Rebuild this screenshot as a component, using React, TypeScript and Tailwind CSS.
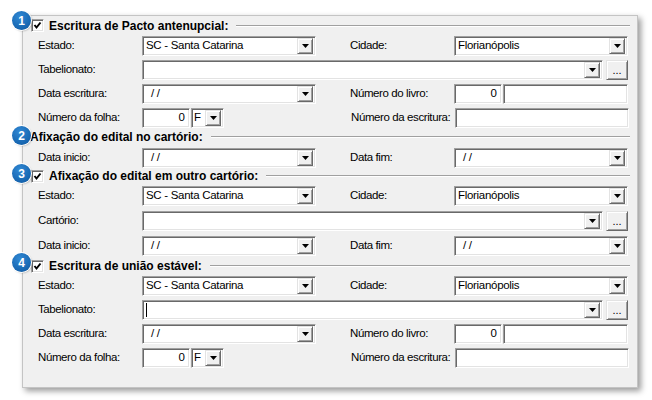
import type { ReactNode } from 'react'

// caixa "afundada" no estilo Windows clássico
const sunken =
  'h-[20px] bg-white border border-t-[#a0a0a0] border-l-[#a0a0a0] border-b-white border-r-white shadow-[inset_1px_1px_0_#696969,inset_-1px_-1px_0_#e3e3e3] flex items-center'

const raised =
  'bg-[#f0f0f0] border border-t-[#e3e3e3] border-l-[#e3e3e3] border-b-[#696969] border-r-[#696969] shadow-[inset_1px_1px_0_#ffffff,inset_-1px_-1px_0_#a0a0a0]'

function Arrow() {
  return (
    <svg width="7" height="4" viewBox="0 0 7 4">
      <polygon points="0,0 7,0 3.5,4" fill="#000" />
    </svg>
  )
}

function DropBtn() {
  return (
    <div className={`${raised} w-[16px] h-[16px] mr-[2px] flex items-center justify-center shrink-0`}>
      <Arrow />
    </div>
  )
}

function Combo({ value, className, pad = 'pl-[3px]' }: { value?: string; className: string; pad?: string }) {
  return (
    <div className={`${sunken} ${className}`}>
      <span className={`flex-1 truncate tracking-[-0.3px] text-[11.5px] ${pad}`}>{value}</span>
      <DropBtn />
    </div>
  )
}

function TextBox({ value, className, right }: { value?: string; className: string; right?: boolean }) {
  return (
    <div className={`${sunken} ${className} ${right ? 'justify-end pr-[4px]' : 'pl-[3px]'}`}>
      <span className="text-[11.5px]">{value}</span>
    </div>
  )
}

function Label({ children, right }: { children: ReactNode; right?: boolean }) {
  return (
    <div className={`${right ? 'w-[138px] pl-[34px]' : 'w-[119px] pl-[15px]'} shrink-0 text-[11.5px] tracking-[-0.4px] whitespace-nowrap`}>
      {children}
    </div>
  )
}

function Row({ children }: { children: ReactNode }) {
  return <div className="flex items-center h-[20px]">{children}</div>
}

function Check() {
  return (
    <div className="w-[13px] h-[13px] bg-white border border-t-[#a0a0a0] border-l-[#a0a0a0] border-b-white border-r-white shadow-[inset_1px_1px_0_#696969,inset_-1px_-1px_0_#e3e3e3] flex items-center justify-center shrink-0">
      <svg width="9" height="9" viewBox="0 0 9 9">
        <path d="M1.5 4 L3.5 6.5 L7.5 1.5" stroke="#000" strokeWidth="2" fill="none" />
      </svg>
    </div>
  )
}

function Header({ title, checked, className }: { title: string; checked?: boolean; className: string }) {
  return (
    <div className={`flex items-center ${className}`}>
      {checked ? (
        <div className="ml-[8px] mr-[5px] flex items-center">
          <Check />
        </div>
      ) : (
        <div className="w-[7px]" />
      )}
      <span className="font-bold text-[12px] whitespace-nowrap">{title}</span>
      <div className="flex-1 ml-[8px] mr-[7px] border-t border-b border-t-[#a0a0a0] border-b-white" />
    </div>
  )
}

function Badge({ n, className }: { n: number; className: string }) {
  return (
    <div
      className={`absolute w-[19px] h-[19px] rounded-full bg-[radial-gradient(circle_at_40%_30%,#3088d4,#0b56a0)] shadow-[0_0_0_1px_#ffffff,1px_1px_2px_rgba(0,0,0,0.35)] text-white font-bold text-[12px] flex items-center justify-center ${className}`}
    >
      {n}
    </div>
  )
}

function Estado() {
  return (
    <Row>
      <Label>Estado:</Label>
      <Combo value="SC - Santa Catarina" className="w-[174px]" />
      <Label right>Cidade:</Label>
      <Combo value="Florianópolis" className="w-[174px]" />
    </Row>
  )
}

function WideRow({ label, cursor }: { label: string; cursor?: boolean }) {
  return (
    <Row>
      <Label>{label}</Label>
      <div className={`${sunken} w-[461px]`}>
        <span className="flex-1 pl-[3px] h-[14px]">
          {cursor && <span className="inline-block w-px h-[14px] bg-black" />}
        </span>
        <DropBtn />
      </div>
      <div className={`${raised} ml-[3px] w-[22px] h-[20px] flex items-end justify-center pb-[3px] leading-none`}>
        ...
      </div>
    </Row>
  )
}

function Escritura({ cursor }: { cursor?: boolean }) {
  return (
    <>
      <Estado />
      <WideRow label="Tabelionato:" cursor={cursor} />
      <Row>
        <Label>Data escritura:</Label>
        <Combo value="/ /" className="w-[174px]" pad="pl-[8px]" />
        <Label right>Número do livro:</Label>
        <TextBox value="0" right className="w-[48px]" />
        <TextBox className="w-[125px] ml-[1px]" />
      </Row>
      <Row>
        <Label>Número da folha:</Label>
        <TextBox value="0" right className="w-[48px]" />
        <Combo value="F" className="w-[33px] ml-[1px]" pad="pl-[2px]" />
        <div className="w-[93px]" />
        <Label right>Número da escritura:</Label>
        <TextBox className="w-[174px]" />
      </Row>
    </>
  )
}

export default function App() {
  return (
    <div className="relative w-[652px] h-[400px] bg-white overflow-hidden font-['Liberation_Sans',Arial,sans-serif] text-[11px] text-black">
      <div className="ml-[22px] mt-[15px] w-[616px] h-[373px] bg-[#f0f0f0] border border-[#c4c4c4] shadow-[3px_3px_6px_rgba(0,0,0,0.4)]">
        {/* 1 */}
        <Header title="Escritura de Pacto antenupcial:" checked className="h-[19px]" />
        <div className="mt-[1px] flex flex-col gap-[4px]">
          <Escritura />
        </div>

        {/* 2 */}
        <Header title="Afixação do edital no cartório:" className="h-[18px]" />
        <div className="mt-[2px]">
          <Row>
            <Label>Data inicio:</Label>
            <Combo value="/ /" className="w-[174px]" pad="pl-[8px]" />
            <Label right>Data fim:</Label>
            <Combo value="/ /" className="w-[174px]" pad="pl-[8px]" />
          </Row>
        </div>

        {/* 3 */}
        <Header title="Afixação do edital em outro cartório:" checked className="h-[16px]" />
        <div className="mt-[2px] flex flex-col gap-[5px]">
          <Estado />
          <WideRow label="Cartório:" />
          <Row>
            <Label>Data inicio:</Label>
            <Combo value="/ /" className="w-[174px]" pad="pl-[8px]" />
            <Label right>Data fim:</Label>
            <Combo value="/ /" className="w-[174px]" pad="pl-[8px]" />
          </Row>
        </div>

        {/* 4 */}
        <Header title="Escritura de união estável:" checked className="h-[20px]" />
        <div className="flex flex-col gap-[4px]">
          <Escritura cursor />
        </div>
      </div>

      <Badge n={1} className="left-[12px] top-[11px]" />
      <Badge n={2} className="left-[12px] top-[126px]" />
      <Badge n={3} className="left-[12px] top-[164px]" />
      <Badge n={4} className="left-[12px] top-[253px]" />
    </div>
  )
}
